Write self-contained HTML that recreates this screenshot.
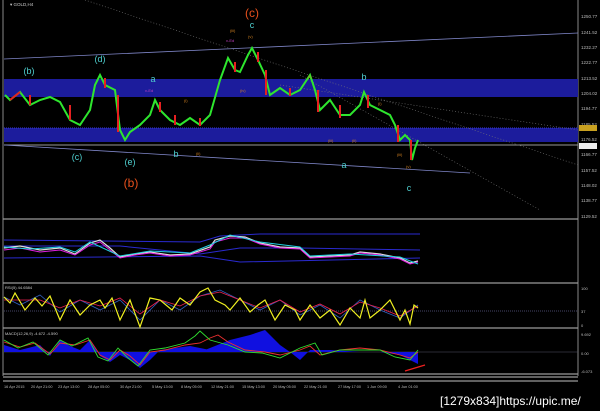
<!DOCTYPE html><html><head><style>
body{margin:0;background:#000;width:600px;height:411px;overflow:hidden}
svg{display:block}
text{font-family:"Liberation Sans",sans-serif}
</style></head><body>
<svg width="600" height="411" viewBox="0 0 600 411" xmlns="http://www.w3.org/2000/svg">
<rect width="600" height="411" fill="#000"/>
<!-- frame -->
<line x1="3" y1="0" x2="3" y2="376" stroke="#888" stroke-width="1"/>
<line x1="578" y1="0" x2="578" y2="376" stroke="#888" stroke-width="1"/>
<!-- bands -->
<rect x="4" y="79" width="574" height="18" fill="#1c1c9c"/>
<rect x="4" y="128" width="574" height="14" fill="#1c1c9c"/>
<line x1="4" y1="128" x2="578" y2="128" stroke="#3a3acc" stroke-dasharray="1 1"/>
<line x1="4" y1="145" x2="578" y2="145" stroke="#999" stroke-width="1"/>
<!-- trend lines -->
<line x1="4" y1="59" x2="578" y2="33" stroke="#7f86c8" stroke-width="0.8"/>
<line x1="4" y1="145" x2="470" y2="173" stroke="#7f86c8" stroke-width="0.8"/>
<line x1="85" y1="0" x2="578" y2="165" stroke="#777" stroke-width="0.6" stroke-dasharray="1 2"/>
<line x1="300" y1="75" x2="540" y2="210" stroke="#777" stroke-width="0.6" stroke-dasharray="1 2"/>
<line x1="280" y1="85" x2="578" y2="130" stroke="#777" stroke-width="0.6" stroke-dasharray="1 2"/>
<!-- price -->
<polyline fill="none" stroke="#2ee62e" stroke-width="2" points="5,95 10,100 20,92 30,105 40,100 50,97 60,102 70,120 80,125 90,110 95,85 100,75 105,85 115,90 120,130 125,140 130,132 140,125 150,115 155,100 160,110 170,120 180,125 190,118 200,125 210,115 220,80 228,58 235,70 240,72 248,55 252,48 258,60 265,75 270,95 280,88 290,95 300,90 310,75 315,90 320,110 330,100 340,115 350,115 360,105 364,92 370,105 380,110 390,115 395,125 400,140 405,135 410,140 412,160 415,148 418,140"/>
<polyline fill="none" stroke="#e62020" stroke-width="2" points="10,100 20,92 M0,0" />
<g stroke="#e62020" stroke-width="2">
<line x1="30" y1="95" x2="30" y2="105"/><line x1="70" y1="105" x2="70" y2="120"/><line x1="105" y1="78" x2="105" y2="88"/>
<line x1="118" y1="95" x2="118" y2="132"/><line x1="160" y1="102" x2="160" y2="112"/><line x1="175" y1="115" x2="175" y2="125"/>
<line x1="200" y1="118" x2="200" y2="126"/><line x1="235" y1="62" x2="235" y2="72"/><line x1="258" y1="52" x2="258" y2="62"/>
<line x1="266" y1="70" x2="266" y2="95"/><line x1="290" y1="88" x2="290" y2="96"/><line x1="318" y1="90" x2="318" y2="112"/>
<line x1="340" y1="105" x2="340" y2="118"/><line x1="368" y1="95" x2="368" y2="108"/><line x1="398" y1="125" x2="398" y2="142"/>
<line x1="411" y1="140" x2="411" y2="160"/>
</g>
<!-- wave labels -->
<g font-size="9" fill="#4fd0d0" text-anchor="middle">
<text x="29" y="74">(b)</text><text x="100" y="62">(d)</text><text x="77" y="160">(c)</text><text x="130" y="165">(e)</text>
<text x="153" y="82">a</text><text x="176" y="157">b</text><text x="252" y="28">c</text><text x="364" y="80">b</text>
<text x="344" y="168">a</text><text x="409" y="191">c</text>
</g>
<text x="252" y="17" font-size="12" fill="#e8501c" text-anchor="middle">(c)</text>
<text x="131" y="187" font-size="12" fill="#e8501c" text-anchor="middle">(b)</text>
<g font-size="4" fill="#d08020"><text x="230" y="32">(iii)</text><text x="248" y="38">(v)</text><text x="240" y="92">(iv)</text><text x="184" y="102">(i)</text><text x="196" y="155">(ii)</text><text x="308" y="78">(i)</text><text x="328" y="142">(iii)</text><text x="352" y="142">(ii)</text><text x="378" y="105">(i)</text><text x="397" y="156">(iii)</text><text x="406" y="168">(v)</text></g>
<g font-size="4" fill="#c040c0"><text x="226" y="42">v-Ed</text><text x="145" y="92">v-Ed</text></g>
<!-- price axis -->
<g font-size="4.5" fill="#bbb">
<text x="581" y="18">1250.77</text><text x="581" y="34">1241.52</text><text x="581" y="49">1232.27</text><text x="581" y="64">1222.77</text>
<text x="581" y="80">1213.52</text><text x="581" y="95">1204.02</text><text x="581" y="110">1194.77</text><text x="581" y="126">1185.52</text>
<text x="581" y="141">1176.52</text><text x="581" y="156">1166.77</text><text x="581" y="172">1157.52</text><text x="581" y="187">1148.02</text>
<text x="581" y="202">1138.77</text><text x="581" y="218">1129.52</text>
</g>
<rect x="579" y="125" width="18" height="6" fill="#c8a020"/><rect x="579" y="143" width="18" height="6" fill="#eee"/>
<text x="10" y="6" font-size="4.5" fill="#ccc">▾ GOLD,H4</text>
<!-- separators -->
<g stroke="#999" stroke-width="1.2">
<line x1="3" y1="219" x2="578" y2="219"/><line x1="3" y1="283" x2="578" y2="283"/><line x1="3" y1="328" x2="578" y2="328"/>
<line x1="3" y1="374" x2="578" y2="374"/><line x1="3" y1="377" x2="578" y2="377"/><line x1="3" y1="381" x2="578" y2="381"/>
</g>
<!-- panel 2 -->
<polyline fill="none" stroke="#2a2ad0" stroke-width="1" points="4,240 200,242 220,236 260,234 420,234"/>
<polyline fill="none" stroke="#2a2ad0" stroke-width="1" points="4,258 200,256 240,262 420,258"/>
<polyline fill="none" stroke="#2a2ad0" stroke-width="1" points="4,246 120,246 200,254 240,248 300,248 420,250"/>
<polyline fill="none" stroke="#ddd" stroke-width="1.2" points="4,248 20,246 40,250 60,248 75,254 90,243 100,240 110,248 120,257 135,254 150,252 170,255 190,254 210,247 215,240 230,236 245,237 260,243 280,247 300,248 310,257 330,256 350,255 360,252 380,254 400,258 410,263 418,261"/>
<polyline fill="none" stroke="#e020e0" stroke-width="1" points="4,250 20,248 40,252 60,250 75,255 90,245 100,242 110,250 120,258 135,255 150,253 170,256 190,255 210,249 215,242 230,238 245,238 260,244 280,248 300,249 310,258 330,257 350,256 360,253 380,255 400,259 410,264 418,262"/>
<polyline fill="none" stroke="#20d0e0" stroke-width="1" points="4,247 30,249 60,247 75,252 90,242 120,256 150,251 190,253 210,245 230,235 260,242 300,247 310,256 350,254 400,257 418,264"/>
<!-- RSI -->
<line x1="4" y1="311" x2="578" y2="311" stroke="#446" stroke-dasharray="1 1"/>
<polyline fill="none" stroke="#3060c0" stroke-width="0.8" points="4,297 20,305 40,295 60,312 80,300 100,310 120,300 140,320 160,300 180,310 200,296 220,290 240,300 260,310 280,300 300,315 320,305 340,318 360,300 380,310 400,318 418,305"/>
<polyline fill="none" stroke="#ee2050" stroke-width="0.8" points="4,300 20,300 40,300 60,308 80,300 100,306 120,298 140,314 160,300 180,306 200,296 220,292 240,300 260,308 280,300 300,312 320,304 340,314 360,302 380,308 400,316 418,306"/>
<polyline fill="none" stroke="#f0f020" stroke-width="1.2" points="4,297 10,303 15,293 25,310 35,298 42,306 50,296 60,320 70,300 80,315 90,305 100,300 105,308 112,298 120,320 130,300 140,327 150,298 160,300 172,310 180,298 190,305 200,292 208,288 215,300 225,305 230,310 240,298 250,312 258,305 265,300 275,320 285,305 295,310 300,320 310,305 320,318 330,310 340,325 350,308 360,318 365,300 370,318 380,310 390,300 400,320 405,310 410,324 414,305 418,308"/>
<text x="5" y="289" font-size="4" fill="#ccc">RSI(5) 44.6584</text>
<g font-size="4" fill="#bbb"><text x="581" y="290">100</text><text x="581" y="313">37</text><text x="581" y="327">0</text></g>
<!-- MACD -->
<line x1="4" y1="352" x2="578" y2="352" stroke="#556" stroke-width="0.6"/>
<path d="M4,352 L4,345 20,350 40,345 50,356 60,340 70,346 80,350 90,340 100,356 110,362 120,355 130,360 140,368 150,360 160,350 190,346 210,350 220,352 200,352 230,340 250,335 265,330 280,345 290,352 300,360 310,350 330,350 360,352 380,352 400,355 418,364 418,352 Z" fill="#1010e0"/>
<polyline fill="none" stroke="#ee3030" stroke-width="0.9" points="4,342 20,347 35,343 50,354 60,343 75,345 90,340 100,355 110,360 120,350 130,356 140,365 150,352 165,350 185,345 200,343 210,338 218,335 228,342 245,350 265,352 280,355 300,350 310,346 320,355 340,350 360,348 380,350 400,355 410,358 418,352"/>
<polyline fill="none" stroke="#30e030" stroke-width="0.9" points="4,340 18,348 33,342 48,355 60,340 72,346 88,338 98,357 108,361 118,348 128,358 138,366 150,350 165,348 185,343 195,336 200,331 210,340 228,345 245,352 262,353 280,358 300,348 315,343 322,355 340,350 358,350 380,350 395,357 410,360 418,350"/>
<line x1="405" y1="371" x2="425" y2="365" stroke="#ee2020" stroke-width="1.2"/>
<text x="5" y="335" font-size="4" fill="#ccc">MACD(12,26,9) -4.672 -4.590</text>
<g font-size="4" fill="#bbb"><text x="581" y="336">9.692</text><text x="581" y="355">0.00</text><text x="581" y="373">-6.073</text></g>
<!-- time axis -->
<g font-size="3.8" fill="#bbb">
<text x="4" y="388">16 Apr 2015</text><text x="31" y="388">20 Apr 21:00</text><text x="58" y="388">23 Apr 13:00</text><text x="88" y="388">28 Apr 05:00</text>
<text x="120" y="388">30 Apr 21:00</text><text x="152" y="388">5 May 13:00</text><text x="181" y="388">8 May 05:00</text><text x="211" y="388">12 May 21:00</text>
<text x="242" y="388">15 May 13:00</text><text x="273" y="388">20 May 05:00</text><text x="304" y="388">22 May 21:00</text><text x="338" y="388">27 May 17:00</text>
<text x="367" y="388">1 Jun 09:00</text><text x="398" y="388">4 Jun 01:00</text>
</g>
<text x="440" y="405" font-size="12" fill="#fff" font-family="Liberation Mono,monospace">[1279x834]https://upic.me/</text>
</svg>
</body></html>
